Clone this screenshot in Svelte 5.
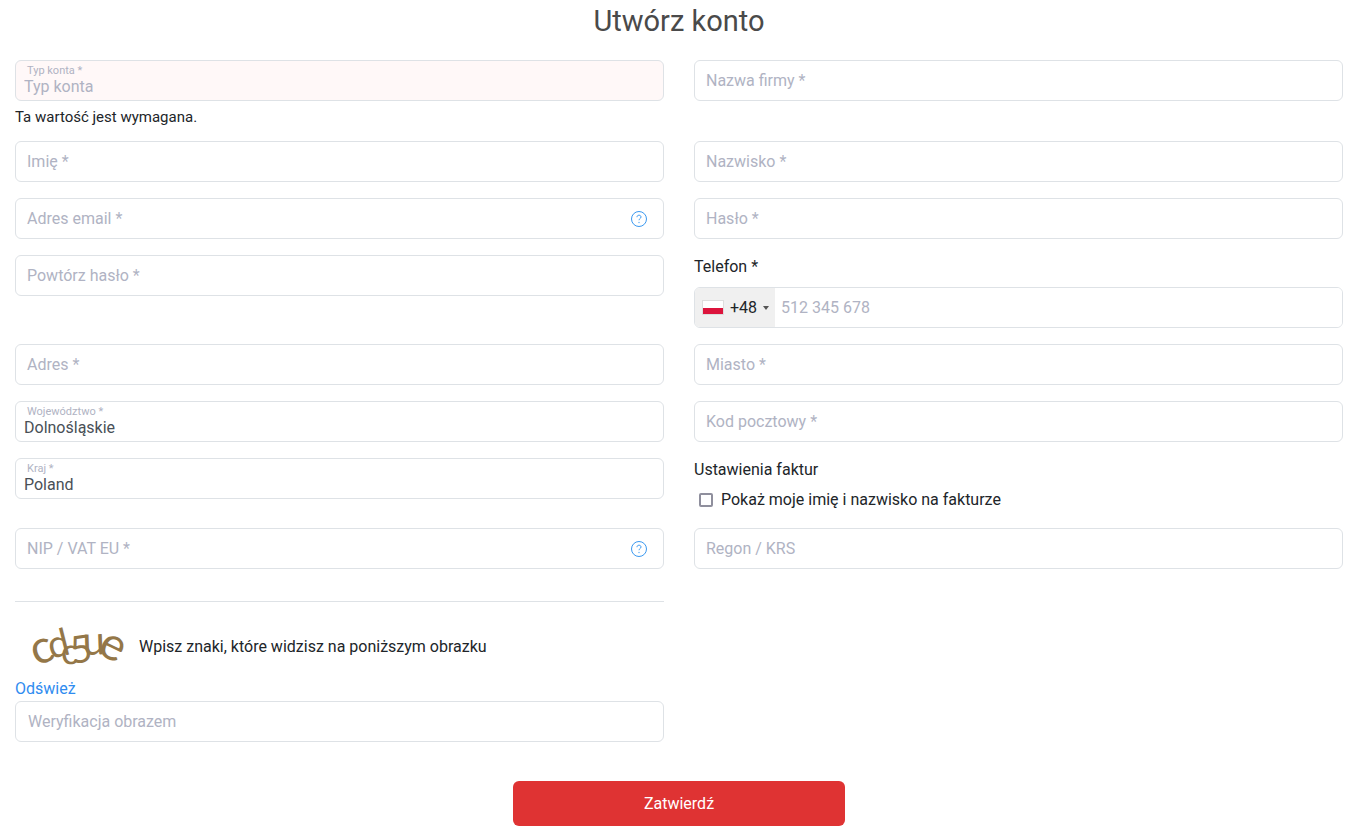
<script>
  const regions = ['Dolnośląskie', 'Małopolskie', 'Mazowieckie', 'Śląskie'];
  const countries = ['Poland', 'Germany', 'Czechia'];
  const glyphs = [
    { c: 'c', x: 11, y: 44, r: -20, s: 46 },
    { c: 'd', x: 26, y: 37, r: -14, s: 38 },
    { c: 'c', x: 37, y: 43, r: -6, s: 36 },
    { c: '5', x: 47, y: 42, r: -8, s: 38 },
    { c: 'u', x: 58, y: 33, r: -2, s: 40 },
    { c: 'e', x: 71, y: 31, r: 26, s: 46 }
  ];
  let showName = $state(false);
</script>

{#snippet help(text)}
  <button type="button" class="help" aria-label={text}>
    <svg viewBox="0 0 18 18" width="18" height="18" aria-hidden="true">
      <circle cx="9" cy="9" r="7.5" />
      <path d="M7 7.2C7 5.9 7.8 5.2 9 5.2s2 .7 2 1.8c0 1.6-2 1.6-2 3.2" />
      <path d="M9 11.9v1.2" />
    </svg>
  </button>
{/snippet}

{#snippet field(id, label, type = 'text', hint = '')}
  <div class="field">
    <div class="box">
      <input {id} {type} />
      <label for={id}>{label}</label>
      {#if hint}{@render help(hint)}{/if}
    </div>
  </div>
{/snippet}

{#snippet choice(id, label, options)}
  <div class="field">
    <div class="box floating">
      <select {id}>
        {#each options as option}<option>{option}</option>{/each}
      </select>
      <label for={id}>{label}</label>
    </div>
  </div>
{/snippet}

<main>
  <h1>Utwórz konto</h1>
  <form onsubmit={(e) => e.preventDefault()}>
    <div class="grid">
      <div class="field">
        <div class="box floating invalid">
          <select id="type" aria-describedby="type-error">
            <option>Typ konta</option>
          </select>
          <label for="type">Typ konta *</label>
        </div>
        <p class="error" id="type-error">Ta wartość jest wymagana.</p>
      </div>
      {@render field('company', 'Nazwa firmy *')}
      {@render field('first', 'Imię *')}
      {@render field('last', 'Nazwisko *')}
      {@render field('email', 'Adres email *', 'email', 'Pomoc')}
      {@render field('password', 'Hasło *', 'password')}
      {@render field('repeat', 'Powtórz hasło *', 'password')}
      <div class="field">
        <label class="caption" for="phone">Telefon *</label>
        <div class="phone">
          <button type="button" class="prefix">
            <span class="flag"></span>
            <span>+48</span>
            <span class="caret"></span>
          </button>
          <input id="phone" type="tel" placeholder="512 345 678" />
        </div>
      </div>
      {@render field('address', 'Adres *')}
      {@render field('city', 'Miasto *')}
      {@render choice('region', 'Województwo *', regions)}
      {@render field('zip', 'Kod pocztowy *')}
      {@render choice('country', 'Kraj *', countries)}
      <div class="invoice">
        <p>Ustawienia faktur</p>
        <label class="check">
          <input type="checkbox" bind:checked={showName} />
          <span>Pokaż moje imię i nazwisko na fakturze</span>
        </label>
      </div>
      {@render field('nip', 'NIP / VAT EU *', 'text', 'Pomoc')}
      {@render field('regon', 'Regon / KRS')}
      <div class="captcha">
        <div class="challenge">
          <svg viewBox="0 0 110 50" width="110" height="50" role="img" aria-label="captcha">
            {#each glyphs as g}
              <text transform="translate({g.x} {g.y}) rotate({g.r})" font-size={g.s}>{g.c}</text>
            {/each}
          </svg>
          <label for="captcha">Wpisz znaki, które widzisz na poniższym obrazku</label>
        </div>
        <a href="#refresh">Odśwież</a>
        <div class="box">
          <input id="captcha" type="text" placeholder="Weryfikacja obrazem" />
        </div>
      </div>
    </div>
    <button class="submit" type="submit">Zatwierdź</button>
  </form>
</main>

<style>
  :global(body) {
    background: #fff;
    color: #212529;
    font: 16px/24px Roboto, sans-serif;
  }
  * {
    box-sizing: border-box;
  }
  main {
    padding: 4px 15px 14px;
  }
  h1 {
    margin: 0 0 22px;
    color: #4a4a4a;
    font-size: 29px;
    font-weight: 400;
    line-height: 34px;
    text-align: center;
  }
  p {
    margin: 0;
  }
  input,
  select,
  button {
    font: inherit;
    margin: 0;
  }
  .grid {
    display: grid;
    grid-template-columns: 1fr 1fr;
    gap: 16px 30px;
  }
  .box {
    position: relative;
  }
  .box input,
  .box select,
  .phone {
    display: block;
    width: 100%;
    height: 41px;
    border: 1px solid #dee2e6;
    border-radius: 6px;
    background: #fff;
    color: #495057;
    outline: none;
  }
  .box input {
    padding: 0 12px;
  }
  .box select {
    appearance: none;
    padding: 12px 8px 0;
  }
  .box label {
    position: absolute;
    top: 9px;
    left: 12px;
    color: #b0b3c3;
    pointer-events: none;
  }
  .box.floating label {
    top: 4px;
    font-size: 11px;
    line-height: 14px;
  }
  .box.invalid select {
    background: #fff8f8;
    color: #b0b3c3;
  }
  ::placeholder {
    color: #b0b3c3;
    opacity: 1;
  }
  .error {
    margin-top: 8px;
    font-size: 15px;
    line-height: 16px;
  }
  .help {
    position: absolute;
    top: 12px;
    right: 16px;
    width: 18px;
    height: 18px;
    padding: 0;
    border: 0;
    background: none;
  }
  .help svg {
    display: block;
    fill: none;
    stroke: #3b99f0;
    stroke-width: 1;
  }
  .caption {
    display: block;
    margin-bottom: 8px;
  }
  .phone {
    display: flex;
    overflow: hidden;
  }
  .phone input {
    flex: 1;
    min-width: 0;
    padding: 0 6px;
    border: 0;
    outline: none;
  }
  .prefix {
    display: flex;
    align-items: center;
    gap: 6px;
    padding: 0 6px 0 7px;
    border: 0;
    background: #f0f0f0;
    color: #212529;
  }
  .flag {
    width: 22px;
    height: 15px;
    border: 1px solid #ddd;
    background: linear-gradient(#fff 50%, #dc143c 50%);
  }
  .caret {
    border: 3px solid transparent;
    border-top: 4px solid #555;
    border-bottom: 0;
  }
  .check {
    display: flex;
    align-items: center;
    gap: 8px;
    margin-top: 6px;
    padding-left: 5px;
  }
  .check input {
    appearance: none;
    width: 14px;
    height: 14px;
    border: 2px solid #8f8f9d;
    border-radius: 2px;
    background: #fff;
  }
  .check input:checked {
    background: #3b99f0;
  }
  .captcha {
    margin-top: 16px;
    padding-top: 20px;
    border-top: 1px solid #dee2e6;
  }
  .challenge {
    display: flex;
    align-items: center;
    gap: 4px;
    padding-left: 10px;
    margin-bottom: 5px;
  }
  .challenge svg {
    overflow: visible;
    fill: #947748;
    font-family: Lato, sans-serif;
    font-weight: 400;
    line-height: 50px;
  }
  a {
    display: block;
    color: #2f8cf0;
    text-decoration: none;
  }
  .submit {
    display: block;
    width: 25%;
    height: 45px;
    margin: 39px auto 0;
    border: 0;
    border-radius: 6px;
    background: #df3333;
    color: #fff;
  }
</style>
